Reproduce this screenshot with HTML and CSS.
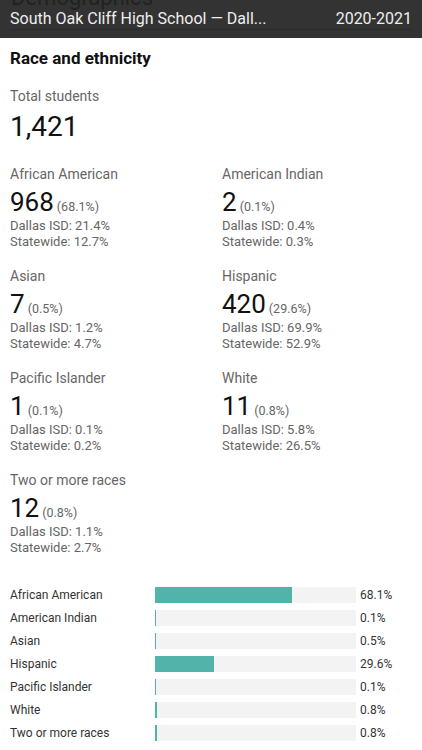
FILE: index.html
```html
<!DOCTYPE html>
<html lang="en">

<head>
  <meta charset="UTF-8" />
  <meta name="viewport" content="width=device-width, initial-scale=1.0" />
  <title>Demographics - South Oak Cliff High School</title>
  <link rel="stylesheet" href="styles.css">
</head>

<body>
  <header class="topbar">
    <div class="ghost-title">Demographics</div>
    <div class="topbar-row">
      <span class="school">South Oak Cliff High School — Dall...</span>
      <span class="year">2020-2021</span>
    </div>
  </header>

  <main class="content">
    <h2>Race and ethnicity</h2>

    <div class="total-label">Total students</div>
    <div class="total-value">1,421</div>

    <div class="groups">
      <div class="group">
        <div class="group-name">African American</div>
        <div class="group-count">968<span class="pct">(68.1%)</span></div>
        <div class="compare">Dallas ISD: 21.4%</div>
        <div class="compare">Statewide: 12.7%</div>
      </div>
      <div class="group">
        <div class="group-name">American Indian</div>
        <div class="group-count">2<span class="pct">(0.1%)</span></div>
        <div class="compare">Dallas ISD: 0.4%</div>
        <div class="compare">Statewide: 0.3%</div>
      </div>
      <div class="group">
        <div class="group-name">Asian</div>
        <div class="group-count">7<span class="pct">(0.5%)</span></div>
        <div class="compare">Dallas ISD: 1.2%</div>
        <div class="compare">Statewide: 4.7%</div>
      </div>
      <div class="group">
        <div class="group-name">Hispanic</div>
        <div class="group-count">420<span class="pct">(29.6%)</span></div>
        <div class="compare">Dallas ISD: 69.9%</div>
        <div class="compare">Statewide: 52.9%</div>
      </div>
      <div class="group">
        <div class="group-name">Pacific Islander</div>
        <div class="group-count">1<span class="pct">(0.1%)</span></div>
        <div class="compare">Dallas ISD: 0.1%</div>
        <div class="compare">Statewide: 0.2%</div>
      </div>
      <div class="group">
        <div class="group-name">White</div>
        <div class="group-count">11<span class="pct">(0.8%)</span></div>
        <div class="compare">Dallas ISD: 5.8%</div>
        <div class="compare">Statewide: 26.5%</div>
      </div>
      <div class="group">
        <div class="group-name">Two or more races</div>
        <div class="group-count">12<span class="pct">(0.8%)</span></div>
        <div class="compare">Dallas ISD: 1.1%</div>
        <div class="compare">Statewide: 2.7%</div>
      </div>
    </div>

    <div class="chart">
      <div class="chart-label">African American</div>
      <div class="track"><div class="fill" style="width: 68.1%"></div></div>
      <div class="chart-value">68.1%</div>

      <div class="chart-label">American Indian</div>
      <div class="track"><div class="fill" style="width: 0.1%"></div></div>
      <div class="chart-value">0.1%</div>

      <div class="chart-label">Asian</div>
      <div class="track"><div class="fill" style="width: 0.5%"></div></div>
      <div class="chart-value">0.5%</div>

      <div class="chart-label">Hispanic</div>
      <div class="track"><div class="fill" style="width: 29.6%"></div></div>
      <div class="chart-value">29.6%</div>

      <div class="chart-label">Pacific Islander</div>
      <div class="track"><div class="fill" style="width: 0.1%"></div></div>
      <div class="chart-value">0.1%</div>

      <div class="chart-label">White</div>
      <div class="track"><div class="fill" style="width: 0.8%"></div></div>
      <div class="chart-value">0.8%</div>

      <div class="chart-label">Two or more races</div>
      <div class="track"><div class="fill" style="width: 0.8%"></div></div>
      <div class="chart-value">0.8%</div>
    </div>
  </main>
</body>

</html>
```

FILE: styles.css
```css
body {
  margin: 0;
  font-family: Roboto, 'Noto Sans', sans-serif;
  background: #fff;
  color: #111;
}

.topbar {
  height: 38px;
  box-sizing: border-box;
  padding: 0 10px;
  background-color: #333;
  overflow: hidden;
}

.ghost-title {
  margin-top: -13px;
  padding-left: 1px;
  font-size: 22px;
  line-height: 22px;
  color: #222;
}

.topbar-row {
  display: flex;
  justify-content: space-between;
  font-size: 16px;
  line-height: 20px;
  color: #eee;
  border-bottom: 1px solid #2b2b2b;
}

.content {
  padding: 0 10px;
}

.content h2 {
  margin: 10px 0 0;
  font-size: 17px;
  line-height: 20px;
  font-weight: bold;
}

.total-label {
  margin-top: 18px;
  font-size: 14px;
  line-height: 20px;
  color: #666;
}

.total-value {
  margin-top: 4px;
  font-size: 28px;
  line-height: 34px;
}

.groups {
  margin-top: 20px;
  display: grid;
  grid-template-columns: 1fr 1fr;
  column-gap: 22px;
  row-gap: 16px;
}

.group-name {
  font-size: 14px;
  line-height: 20px;
  color: #666;
}

.group-count {
  margin-top: 2px;
  font-size: 26px;
  line-height: 32px;
}

.group-count .pct {
  margin-left: 3px;
  font-size: 12.5px;
  line-height: 1;
  color: #666;
}

.compare {
  font-size: 13px;
  line-height: 16px;
  color: #666;
}

.chart {
  margin-top: 31px;
  display: grid;
  grid-template-columns: 145px 201px auto;
  row-gap: 7px;
  align-items: center;
  font-size: 12px;
  line-height: 16px;
  color: #333;
}

.track {
  height: 16px;
  background-color: #f3f3f3;
}

.fill {
  height: 100%;
  background-color: #52b3ab;
}

.chart-value {
  padding-left: 4px;
}
```
